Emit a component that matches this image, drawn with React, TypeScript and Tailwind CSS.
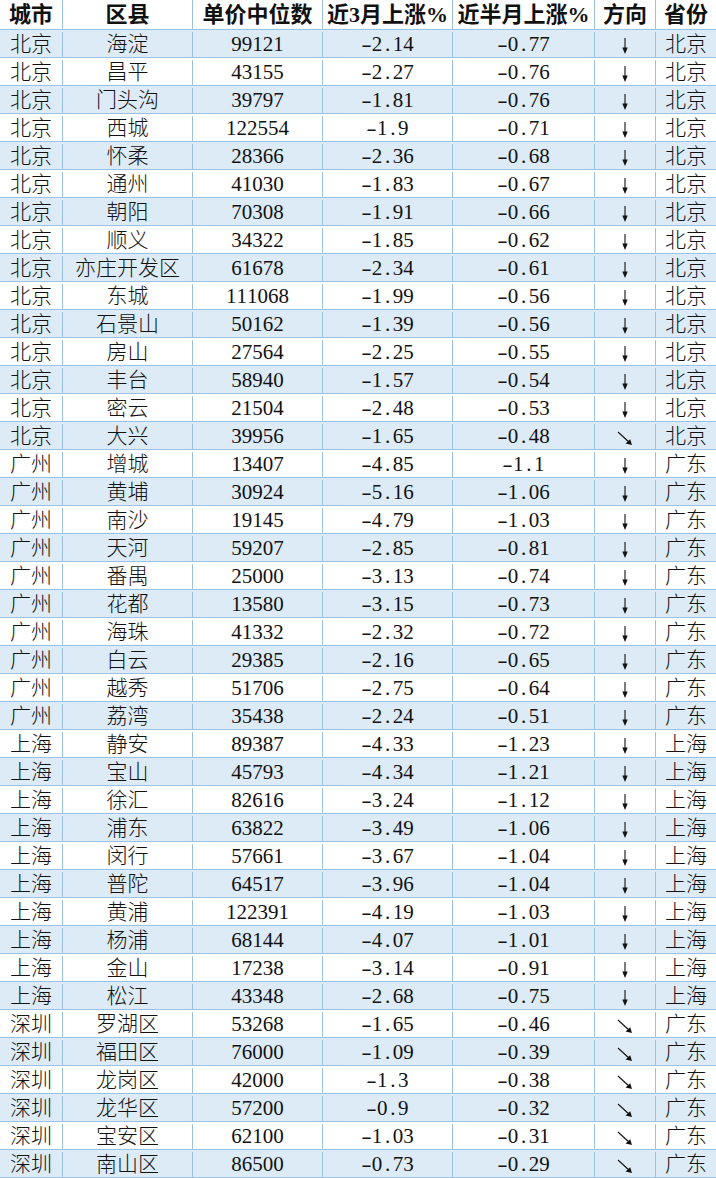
import React from "react";

type Row = [string, string, string, string, string, "d" | "dr", string];

const rows: Row[] = [
  ["北京", "海淀", "99121", "-2.14", "-0.77", "d", "北京"],
  ["北京", "昌平", "43155", "-2.27", "-0.76", "d", "北京"],
  ["北京", "门头沟", "39797", "-1.81", "-0.76", "d", "北京"],
  ["北京", "西城", "122554", "-1.9", "-0.71", "d", "北京"],
  ["北京", "怀柔", "28366", "-2.36", "-0.68", "d", "北京"],
  ["北京", "通州", "41030", "-1.83", "-0.67", "d", "北京"],
  ["北京", "朝阳", "70308", "-1.91", "-0.66", "d", "北京"],
  ["北京", "顺义", "34322", "-1.85", "-0.62", "d", "北京"],
  ["北京", "亦庄开发区", "61678", "-2.34", "-0.61", "d", "北京"],
  ["北京", "东城", "111068", "-1.99", "-0.56", "d", "北京"],
  ["北京", "石景山", "50162", "-1.39", "-0.56", "d", "北京"],
  ["北京", "房山", "27564", "-2.25", "-0.55", "d", "北京"],
  ["北京", "丰台", "58940", "-1.57", "-0.54", "d", "北京"],
  ["北京", "密云", "21504", "-2.48", "-0.53", "d", "北京"],
  ["北京", "大兴", "39956", "-1.65", "-0.48", "dr", "北京"],
  ["广州", "增城", "13407", "-4.85", "-1.1", "d", "广东"],
  ["广州", "黄埔", "30924", "-5.16", "-1.06", "d", "广东"],
  ["广州", "南沙", "19145", "-4.79", "-1.03", "d", "广东"],
  ["广州", "天河", "59207", "-2.85", "-0.81", "d", "广东"],
  ["广州", "番禺", "25000", "-3.13", "-0.74", "d", "广东"],
  ["广州", "花都", "13580", "-3.15", "-0.73", "d", "广东"],
  ["广州", "海珠", "41332", "-2.32", "-0.72", "d", "广东"],
  ["广州", "白云", "29385", "-2.16", "-0.65", "d", "广东"],
  ["广州", "越秀", "51706", "-2.75", "-0.64", "d", "广东"],
  ["广州", "荔湾", "35438", "-2.24", "-0.51", "d", "广东"],
  ["上海", "静安", "89387", "-4.33", "-1.23", "d", "上海"],
  ["上海", "宝山", "45793", "-4.34", "-1.21", "d", "上海"],
  ["上海", "徐汇", "82616", "-3.24", "-1.12", "d", "上海"],
  ["上海", "浦东", "63822", "-3.49", "-1.06", "d", "上海"],
  ["上海", "闵行", "57661", "-3.67", "-1.04", "d", "上海"],
  ["上海", "普陀", "64517", "-3.96", "-1.04", "d", "上海"],
  ["上海", "黄浦", "122391", "-4.19", "-1.03", "d", "上海"],
  ["上海", "杨浦", "68144", "-4.07", "-1.01", "d", "上海"],
  ["上海", "金山", "17238", "-3.14", "-0.91", "d", "上海"],
  ["上海", "松江", "43348", "-2.68", "-0.75", "d", "上海"],
  ["深圳", "罗湖区", "53268", "-1.65", "-0.46", "dr", "广东"],
  ["深圳", "福田区", "76000", "-1.09", "-0.39", "dr", "广东"],
  ["深圳", "龙岗区", "42000", "-1.3", "-0.38", "dr", "广东"],
  ["深圳", "龙华区", "57200", "-0.9", "-0.32", "dr", "广东"],
  ["深圳", "宝安区", "62100", "-1.03", "-0.31", "dr", "广东"],
  ["深圳", "南山区", "86500", "-0.73", "-0.29", "dr", "广东"],
];

const Num = ({ v }: { v: string }) => (
  <span className="inline-flex">
    {[...v].map((c, i) => (
      <span key={i} className="inline-block w-[10.5px] text-center">
        {c === "-" ? <span className="inline-block scale-x-[1.5]">-</span> : c}
      </span>
    ))}
  </span>
);

const ArrowDown = () => (
  <svg width="8" height="16" viewBox="0 0 8 16" aria-label="↓" className="mt-[3px]">
    <line x1="4" y1="0" x2="4" y2="11" stroke="#111" strokeWidth="1.1" />
    <path d="M1.3 9.5 L6.7 9.5 L4 16 Z" fill="#111" />
  </svg>
);

const ArrowDR = () => (
  <svg width="16" height="15" viewBox="0 0 16 15" aria-label="↘" className="mt-[3px]">
    <line x1="1" y1="1" x2="13" y2="12" stroke="#111" strokeWidth="1.1" />
    <path d="M15 14 L8.5 12.6 L13.2 8.2 Z" fill="#111" />
  </svg>
);

const cell = "flex items-center justify-center border-r border-[#9bc2e6]";

export default function App() {
  return (
    <div
      className="w-[716px] h-[1178px] bg-white text-[#111] overflow-hidden"
      style={{ fontFamily: '"Liberation Serif", "Noto Sans CJK SC", serif' }}
    >
      <div className="grid grid-cols-[63px_130px_130px_130px_142px_61px_60px] h-[30px] border-b border-[#9bc2e6] font-bold text-[22px] leading-none">
        <div className={cell}>城市</div>
        <div className={cell}>区县</div>
        <div className={cell}>单价中位数</div>
        <div className={cell}>近3月上涨%</div>
        <div className={cell}>近半月上涨%</div>
        <div className={cell}>方向</div>
        <div className="flex items-center justify-center">省份</div>
      </div>
      {rows.map((r, i) => (
        <div
          key={i}
          className={`grid grid-cols-[63px_130px_130px_130px_142px_61px_60px] h-[28px] border-b border-[#9bc2e6] text-[21px] leading-none font-light pt-[2px] ${
            i % 2 === 0 ? "bg-[#ddebf7]" : "bg-white"
          }`}
        >
          <div className={cell}>{r[0]}</div>
          <div className={cell}>{r[1]}</div>
          <div className={cell}>
            <Num v={r[2]} />
          </div>
          <div className={cell}>
            <Num v={r[3]} />
          </div>
          <div className={cell}>
            <Num v={r[4]} />
          </div>
          <div className={cell}>{r[5] === "d" ? <ArrowDown /> : <ArrowDR />}</div>
          <div className="flex items-center justify-center">{r[6]}</div>
        </div>
      ))}
    </div>
  );
}
